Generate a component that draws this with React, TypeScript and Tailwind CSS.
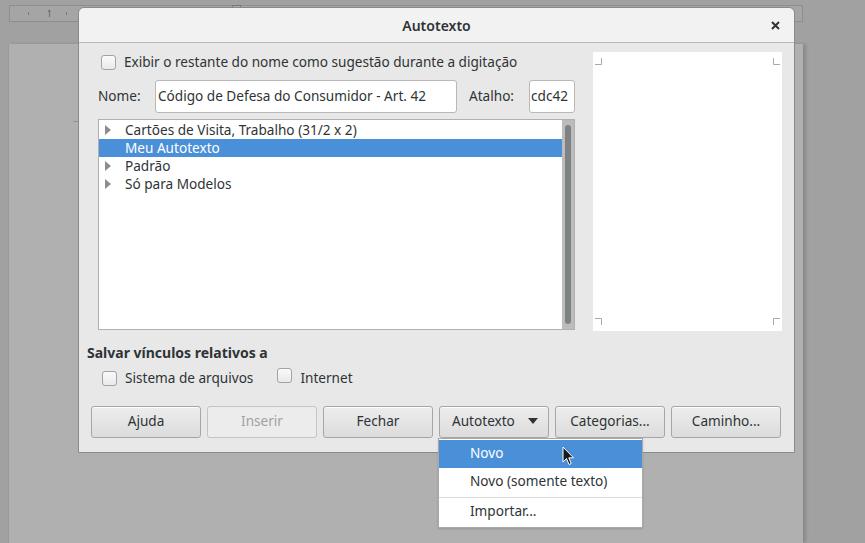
import React from 'react';

const font = { fontFamily: '"Noto Sans", "DejaVu Sans", sans-serif' };

const Check = () => (
  <span className="inline-block w-[15px] h-[15px] rounded-[3px] border border-[#a3a3a3] bg-gradient-to-b from-[#fafafa] to-[#e9e9e9] shrink-0" />
);

const Arrow = () => (
  <svg width="6" height="10" viewBox="0 0 6 10" className="shrink-0">
    <path d="M0 0 L6 5 L0 10 Z" fill="#8b8e8f" />
  </svg>
);

const treeRows = [
  { label: 'Cartões de Visita, Trabalho (31/2 x 2)', arrow: true },
  { label: 'Meu Autotexto', arrow: false, selected: true },
  { label: 'Padrão', arrow: true },
  { label: 'Só para Modelos', arrow: true },
];

const buttons = ['Ajuda', 'Inserir', 'Fechar', 'Autotexto', 'Categorias...', 'Caminho...'];

const Corner = ({ d }: { d: string }) => (
  <svg width="7" height="7" viewBox="0 0 7 7">
    <path d={d} stroke="#a9a9a9" strokeWidth="1" fill="none" />
  </svg>
);

export default function App() {
  return (
    <div className="relative w-[865px] h-[543px] overflow-hidden bg-[#a1a1a1] text-[13.6px] text-[#2e3436] flex flex-col" style={font}>
      {/* ruler */}
      <div className="mt-[5px] ml-[9px] w-[794px] h-[17px] border border-[#8e8e8e] bg-[#a5a5a5] flex items-center relative">
        <div className="flex items-center pl-[18px] gap-[18px] text-[8px] text-[#555]">
          {Array.from({ length: 40 }).map((_, i) => (
            i === 1 ? <span key={i} className="w-px text-center leading-none">1</span> :
              <span key={i} className={i % 2 ? 'w-px h-[2px] bg-[#7a7a7a]' : 'w-px h-[3px] bg-[#7a7a7a]'} />
          ))}
        </div>
        <span className="absolute left-[222px] top-[-1px] w-[9px] h-[8px] border border-[#7a7a7a] bg-[#a9a9a9]" />
      </div>

      {/* page */}
      <div className="mt-[22px] ml-[8px] w-[795px] flex-1 bg-[#b0b0b0] border-l border-[#9b9b9b] shadow-[3px_0_3px_rgba(0,0,0,0.15)] relative">
        <span className="absolute left-[64px] top-[77px] w-[8px] h-px bg-[#8e8e8e]" />
      </div>

      {/* dialog */}
      <div className="absolute left-[78px] top-[7px] w-[717px] h-[446px] border border-[#8a8a8a] rounded-t-[6px] bg-[#e8e8e8] flex flex-col">
        <div className="h-[35px] shrink-0 rounded-t-[6px] bg-[#f2f2f2] border-b border-[#b8b8b8] relative flex items-center justify-center">
          <span className="font-semibold text-[14px] text-[#2e3436]">Autotexto</span>
          <svg className="absolute right-[14px] top-[13px]" width="9" height="9" viewBox="0 0 9 9">
            <path d="M1 1 L8 8 M8 1 L1 8" stroke="#2e3436" strokeWidth="2" />
          </svg>
        </div>

        <div className="flex pt-[9px]">
          <div className="ml-[19px] w-[477px] flex flex-col">
            <div className="h-[20px] flex items-center gap-[8px] pl-[3px]">
              <Check />
              <span>Exibir o restante do nome como sugestão durante a digitação</span>
            </div>
            <div className="mt-[8px] h-[33px] flex items-center">
              <span className="w-[57px]">Nome:</span>
              <div className="w-[302px] h-[33px] bg-white border border-[#b8b8b8] rounded-[3px] flex items-center pl-[2px] whitespace-nowrap overflow-hidden">
                Código de Defesa do Consumidor - Art. 42
              </div>
              <span className="ml-[12px] w-[60px]">Atalho:</span>
              <div className="w-[46px] h-[33px] bg-white border border-[#b8b8b8] rounded-[3px] flex items-center pl-[1px] overflow-hidden">
                cdc42
              </div>
            </div>
            <div className="mt-[6px] h-[211px] bg-white border border-[#b0b0b0] flex">
              <div className="flex-1 pt-[1px]">
                {treeRows.map((r) => (
                  <div key={r.label} className={`h-[18px] flex items-center ${r.selected ? 'bg-[#4a90d9] text-white' : ''}`}>
                    <span className="w-[26px] pl-[6px] flex items-center">{r.arrow && <Arrow />}</span>
                    <span className="leading-none">{r.label}</span>
                  </div>
                ))}
              </div>
              <div className="w-[12px] bg-[#bcbcbc] flex justify-center py-[5px]">
                <div className="w-[6px] h-full rounded-[3px] bg-[#7e8282]" />
              </div>
            </div>
          </div>
          <div className="ml-[18px] w-[189px] h-[279px] bg-white flex flex-col justify-between px-[2px] py-[6px]">
            <div className="flex justify-between">
              <Corner d="M0 6.5 H6.5 V0" />
              <Corner d="M0.5 0 V6.5 H7" />
            </div>
            <div className="flex justify-between">
              <Corner d="M0 0.5 H6.5 V7" />
              <Corner d="M0.5 7 V0.5 H7" />
            </div>
          </div>
        </div>

        <div className="mt-[11px] ml-[8px] h-[20px] flex items-center font-bold text-[14px]">Salvar vínculos relativos a</div>
        <div className="mt-[6px] ml-[23px] h-[20px] flex items-center">
          <Check />
          <span className="ml-[8px]">Sistema de arquivos</span>
          <span className="ml-[24px]"><Check /></span>
          <span className="ml-[8px]">Internet</span>
        </div>

        <div className="mt-[18px] ml-[12px] flex gap-[6px]">
          {buttons.map((b) => (
            <div
              key={b}
              className={`w-[110px] h-[32px] pb-[1px] rounded-[3px] border flex items-center justify-center ${
                b === 'Inserir'
                  ? 'border-[#c4c4c4] bg-[#ececec] text-[#9ea2a3]'
                  : 'border-[#a6a6a6] bg-gradient-to-b from-[#ededed] to-[#dcdcdc] shadow-[0_1px_0_rgba(255,255,255,0.8)_inset]'
              }`}
            >
              {b === 'Autotexto' ? (
                <span className="flex items-center w-full pl-[12px] pr-[10px] justify-between">
                  <span>Autotexto</span>
                  <svg width="10" height="6" viewBox="0 0 10 6"><path d="M0 0 H10 L5 6 Z" fill="#2e3436" /></svg>
                </span>
              ) : (
                b
              )}
            </div>
          ))}
        </div>
      </div>

      {/* dropdown menu */}
      <div className="absolute left-[438px] top-[438px] w-[205px] bg-white border border-[#a9a9a9] py-[1px] shadow-[0_1px_2px_rgba(0,0,0,0.15)]">
        <div className="h-[28px] pb-[2px] flex items-center pl-[31px] bg-[#4a90d9] text-white">Novo</div>
        <div className="h-[28px] pb-[2px] flex items-center pl-[31px]">Novo (somente texto)</div>
        <div className="h-px bg-[#dadada] my-[1px]" />
        <div className="h-[27px] pb-[2px] flex items-center pl-[31px]">Importar...</div>
      </div>

      {/* mouse pointer */}
      <svg className="absolute left-[562px] top-[446px]" width="13" height="20" viewBox="0 0 13 20">
        <path d="M1 1 L1 16 L4.5 12.5 L7 18.5 L9.2 17.6 L6.8 11.8 L11.5 11.8 Z" fill="#1a1a1a" stroke="#ffffff" strokeWidth="1" strokeLinejoin="round" />
      </svg>
    </div>
  );
}
